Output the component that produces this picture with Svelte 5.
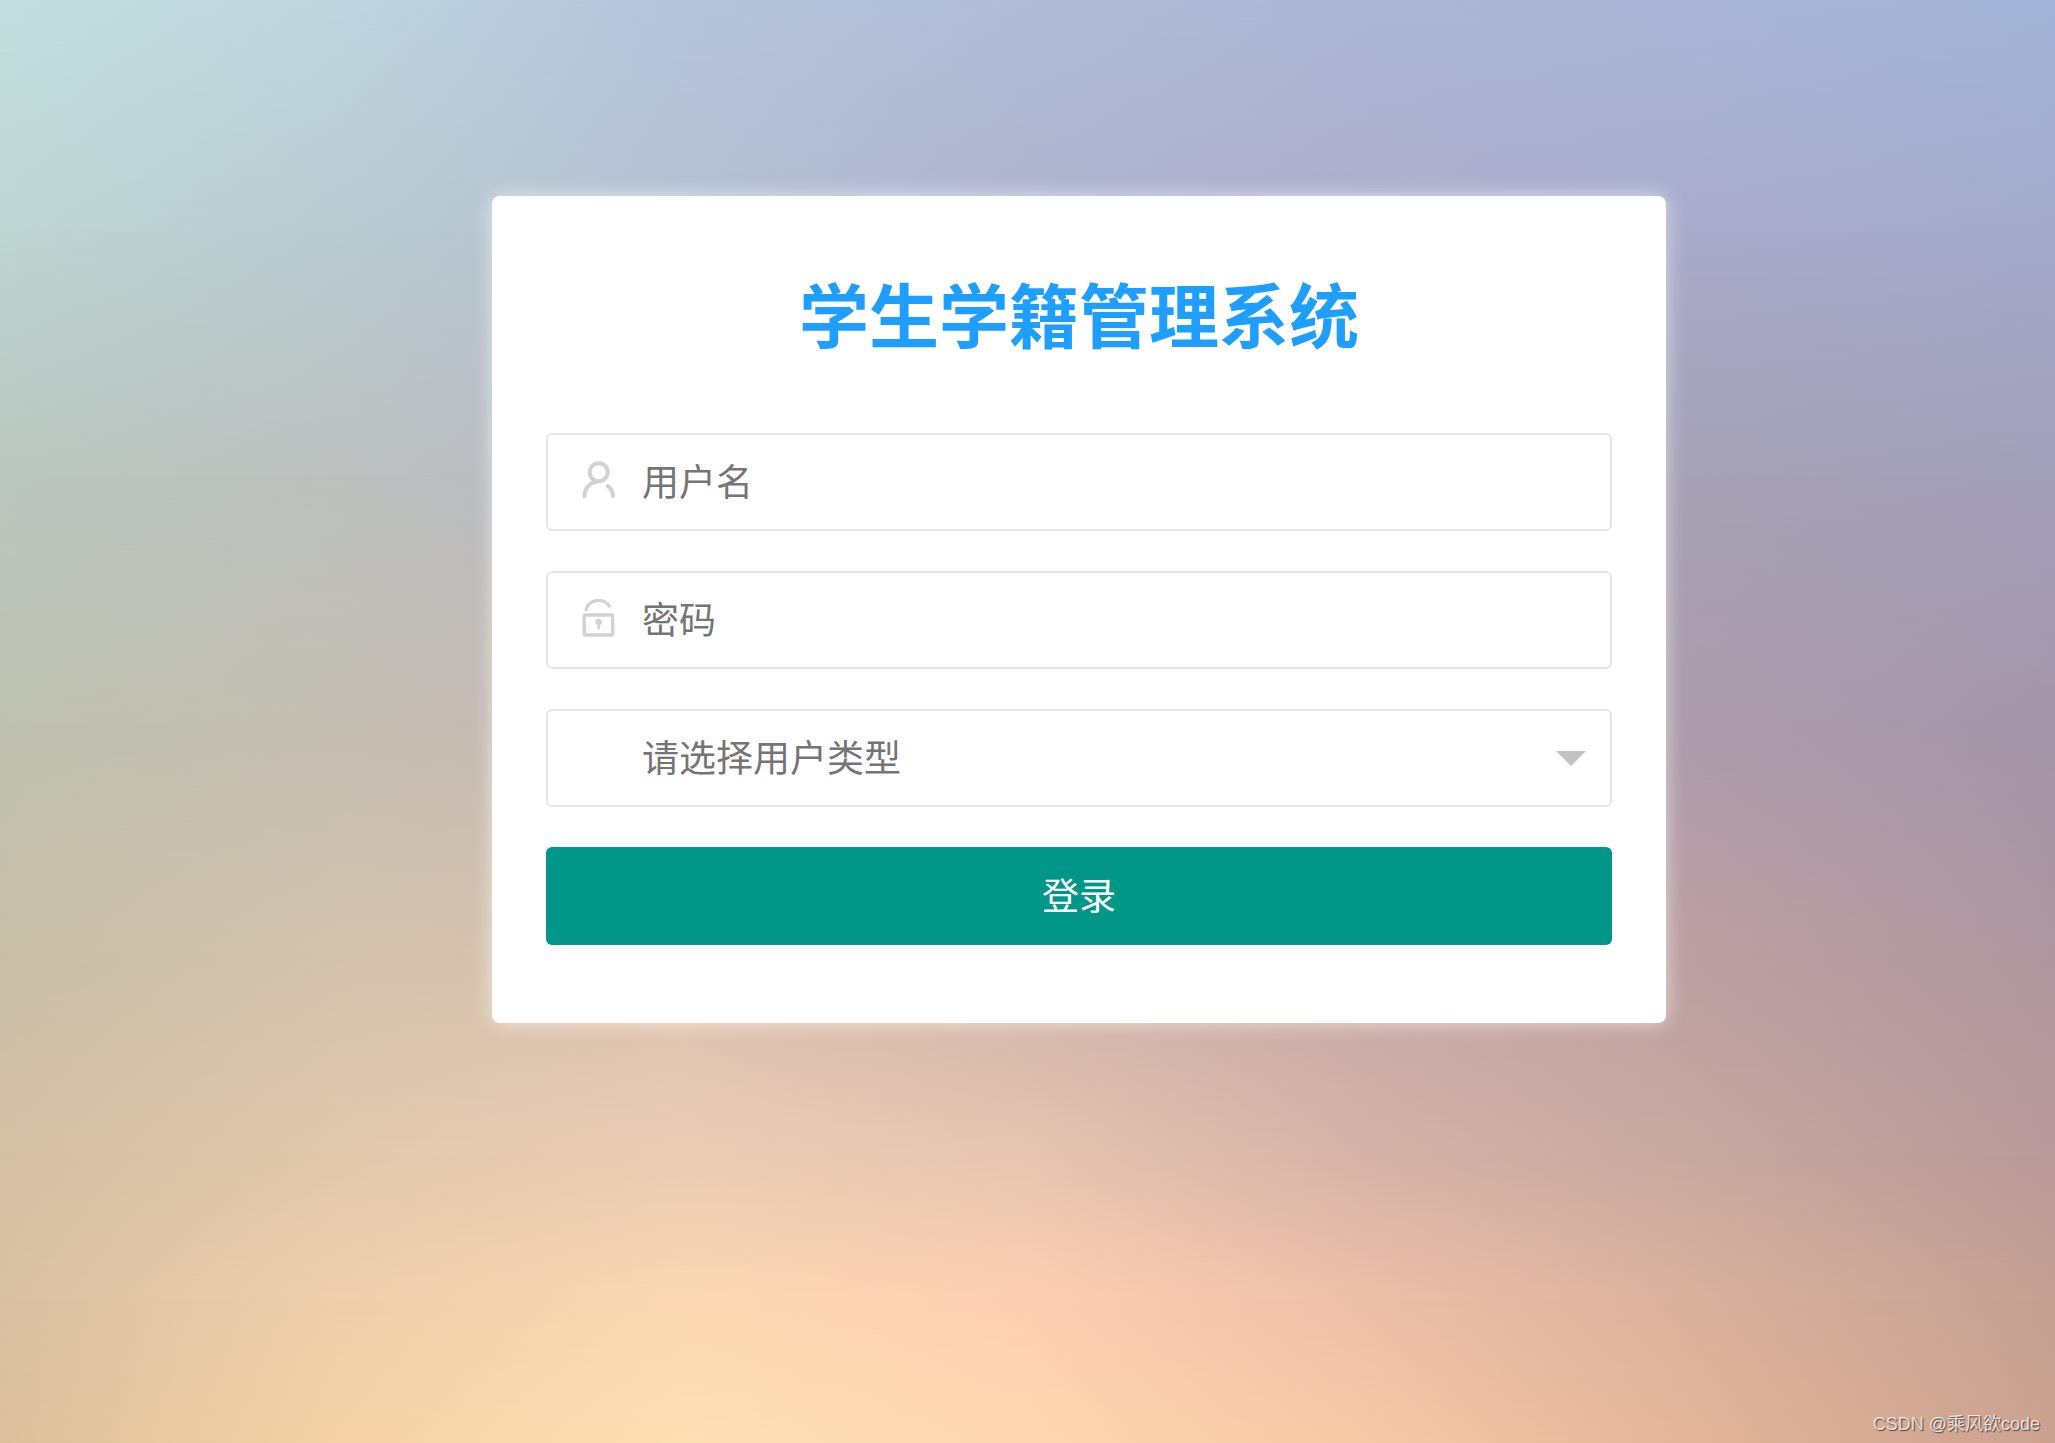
<script lang="ts">
	// colours of the backdrop, one row per stop from top to bottom
	const backdrop = [
		{ at: 0, colors: ['#c4dfdf', '#bfd5df', '#b5c4db', '#b1bdd8', '#acb6d5', '#a9b5d7', '#a2b4d8'] },
		{ at: 16, colors: ['#bed5d2', '#b9cbd1', '#b4bfd0', '#afb3cd', '#adadcb', '#a9abcb', '#a4aacb'] },
		{ at: 33, colors: ['#bac6bf', '#bcc0be', '#b8b8c4', '#b0a8c0', '#a8a4b8', '#a5a1b4', '#a29fb8'] },
		{ at: 50, colors: ['#bec1b0', '#c3bdb2', '#c6b8b4', '#b8a8b0', '#b0a0b0', '#ab9bab', '#a496aa'] },
		{ at: 66, colors: ['#c8bea8', '#d3c3ae', '#d8c0b0', '#ccb2ac', '#c4a8a8', '#bb9fa2', '#ad979f'] },
		{ at: 80, colors: ['#d4c0a4', '#e1c8ac', '#ebccb4', '#e6c5b0', '#d5b2a8', '#c6a8a0', '#b9999a'] },
		{ at: 90, colors: ['#d9c1a2', '#efcfac', '#fad7b2', '#fdcfb2', '#ecbfa8', '#d8b09c', '#c4a093'] },
		{ at: 100, colors: ['#dcc09c', '#f5d2a6', '#fddfb4', '#fdd6b0', '#f6c8a6', '#e1b498', '#cba28f'] }
	];

	let username = '';
	let password = '';
	let userType = '';

	const fade = (index: number) =>
		index === 0
			? 'none'
			: `linear-gradient(transparent ${backdrop[index - 1].at}%, #000 ${backdrop[index].at}%)`;
</script>

<main class="page">
	<div class="backdrop" aria-hidden="true">
		{#each backdrop as row, i}
			<div
				class="backdrop__row"
				style="background-image: linear-gradient(to right, {row.colors.join(', ')}); mask-image: {fade(i)}"
			></div>
		{/each}
	</div>

	<form class="login" on:submit|preventDefault>
		<h1 class="login__title">学生学籍管理系统</h1>

		<div class="field">
			<label class="field__icon" for="username" aria-label="用户名">
				<svg viewBox="0 0 34 38" fill="none" stroke="currentColor" stroke-width="4" stroke-linecap="round">
					<circle cx="17.7" cy="11.2" r="9" />
					<path d="M3.3 35.3C3.6 28 8 22 15 21M26.7 25C30 27.3 31.8 31 32 35.1" />
				</svg>
			</label>
			<input class="field__control" id="username" type="text" placeholder="用户名" bind:value={username} />
		</div>

		<div class="field">
			<label class="field__icon" for="password" aria-label="密码">
				<svg viewBox="0 0 34 38" fill="none" stroke="currentColor" stroke-width="3.3" stroke-linecap="round">
					<rect x="3.2" y="16" width="28.5" height="20" rx="1" />
					<path d="M4.8 12C7.6 -1 23.5 -2 29.2 8.3" stroke-linecap="butt" />
					<circle cx="17.7" cy="23" r="3.2" fill="currentColor" stroke="none" />
					<path d="M17.7 23.5V29.5" stroke-width="2.5" />
				</svg>
			</label>
			<input class="field__control" id="password" type="password" placeholder="密码" bind:value={password} />
		</div>

		<div class="field">
			<select class="field__control field__control--select" aria-label="用户类型" bind:value={userType}>
				<option value="">请选择用户类型</option>
				<option value="student">学生</option>
				<option value="admin">管理员</option>
			</select>
			<svg class="field__arrow" viewBox="0 0 30 15" aria-hidden="true">
				<path d="M0 0H30L15 15Z" fill="currentColor" />
			</svg>
		</div>

		<button class="login__submit" type="submit">登录</button>
	</form>

	<div class="watermark">CSDN @乘风欲code</div>
</main>

<style>
	:global(body) {
		margin: 0;
	}

	.page {
		position: relative;
		display: grid;
		grid-template-columns: 492fr 1174fr 389fr;
		align-items: start;
		box-sizing: border-box;
		min-height: 100vh;
		padding: 196px 0;
		overflow: hidden;
		font-family: 'Liberation Sans', 'Noto Sans CJK SC', sans-serif;
	}

	.backdrop,
	.backdrop__row {
		position: absolute;
		inset: 0;
	}

	.login {
		position: relative;
		grid-column: 2;
		display: flex;
		flex-direction: column;
		gap: 40px;
		box-sizing: border-box;
		padding: 73px 54px 78px;
		border-radius: 8px;
		background: #fff;
		box-shadow: 0 0 20px rgba(255, 255, 255, 0.6);
	}

	.login__title {
		margin: 0 0 24px;
		color: #1e9fff;
		font-size: 70px;
		font-weight: 700;
		line-height: 100px;
		text-align: center;
	}

	.field {
		position: relative;
		color: #d2d2d2;
	}

	.field__icon {
		position: absolute;
		top: 28px;
		left: 35px;
		width: 34px;
		height: 38px;
	}

	.field__icon svg,
	.field__arrow {
		display: block;
	}

	.field__control,
	.login__submit {
		height: 98px;
		padding: 0 94px 4px;
		border-radius: 6px;
		font-family: 'Noto Sans CJK SC', sans-serif;
		font-size: 37px;
	}

	.field__control {
		display: block;
		box-sizing: border-box;
		width: 100%;
		margin: 0;
		border: 2px solid #e6e6e6;
		outline: none;
		background: #fff;
		color: #757575;
	}

	.field__control::placeholder {
		color: #757575;
		opacity: 1;
	}

	.field__control--select {
		appearance: none;
	}

	.field__arrow {
		position: absolute;
		top: 42px;
		right: 26px;
		width: 30px;
		height: 15px;
		color: #c2c2c2;
		pointer-events: none;
	}

	.login__submit {
		border: none;
		background: #009688;
		color: #fff;
		cursor: pointer;
	}

	.watermark {
		position: absolute;
		right: 15px;
		bottom: 6px;
		color: rgba(255, 255, 255, 0.75);
		font-size: 18px;
		line-height: 26px;
		text-shadow: 1px 1px 1px rgba(0, 0, 0, 0.6);
	}
</style>
